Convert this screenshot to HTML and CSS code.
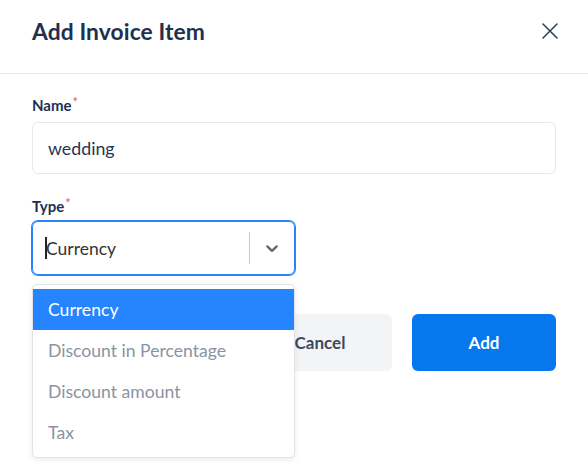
FILE: index.html
```html
<!DOCTYPE html>
<html>
<head>
<meta charset="utf-8">
<link rel="stylesheet" href="styles.css">
</head>
<body>
<div class="modal">
  <div class="header">
    <h1 class="title">Add Invoice Item</h1>
    <svg class="close" width="16" height="16" viewBox="0 0 16 16"><path d="M1 1 L15 15 M15 1 L1 15" stroke="#2c3e55" stroke-width="1.5" stroke-linecap="round"/></svg>
  </div>
  <div class="body">
    <div class="field">
      <div class="label">Name<span class="req">*</span></div>
      <div class="input">wedding</div>
    </div>
    <div class="field field-type">
      <div class="label">Type<span class="req">*</span></div>
      <div class="select-wrap">
        <div class="select">
          <div class="value"><span class="caret"></span>Currency</div>
          <div class="sep"></div>
          <div class="indicator">
            <svg width="20" height="20" viewBox="0 0 20 20"><path fill="#666" d="M4.516 7.548c0.436-0.446 1.043-0.481 1.576 0l3.908 3.747 3.908-3.747c0.533-0.481 1.141-0.446 1.574 0 0.436 0.445 0.408 1.197 0 1.615-0.406 0.418-4.695 4.502-4.695 4.502-0.217 0.223-0.502 0.335-0.787 0.335s-0.57-0.112-0.789-0.335c0 0-4.287-4.084-4.695-4.502s-0.436-1.170 0-1.615z"/></svg>
          </div>
        </div>
        <div class="menu">
          <div class="option active">Currency</div>
          <div class="option">Discount in Percentage</div>
          <div class="option">Discount amount</div>
          <div class="option">Tax</div>
        </div>
      </div>
    </div>
    <div class="actions">
      <button class="btn btn-cancel">Cancel</button>
      <button class="btn btn-add">Add</button>
    </div>
  </div>
</div>
</body>
</html>
```

FILE: styles.css
```css
* { box-sizing: border-box; }
html, body { margin: 0; padding: 0; background: #fff; }
body { font-family: "Lato", "Noto Sans", sans-serif; color: #1e3050; min-height: 471px; }
.modal { width: 588px; min-height: 471px; }
.header {
  height: 74px;
  padding: 0 30px 12px 32px;
  display: flex;
  align-items: center;
  justify-content: space-between;
  border-bottom: 1px solid #e8e9ec;
}
.title { margin: 0; font-size: 22.8px; font-weight: 700; color: #1e3050; letter-spacing: 0.1px; }
.close { display: block; margin-top: 0; }
.body { padding: 21px 32px 0; }
.label { font-size: 15px; font-weight: 700; line-height: 20px; color: #1e3050; }
.req { color: #e8557a; font-size: 13px; font-weight: 400; vertical-align: top; position: relative; top: -3px; margin-left: 1px; }
.input {
  margin-top: 7px;
  height: 52px;
  border: 1px solid #e5e7eb;
  border-radius: 6px;
  padding: 0 15px;
  display: flex;
  align-items: center;
  font-size: 17.8px;
  color: #1f3556;
}
.field-type { margin-top: 22px; }
.select-wrap { position: relative; width: 263px; margin-top: 5px; }
.select {
  height: 54px;
  border: 1px solid #2684ff;
  box-shadow: 0 0 0 1px #2684ff;
  border-radius: 6px;
  display: flex;
  align-items: center;
}
.value { flex: 1; padding-left: 12px; font-size: 17.5px; color: #333; display: flex; align-items: center; }
.caret { display: inline-block; width: 1.5px; height: 22px; background: #222; margin-right: -0.5px; }
.sep { width: 1px; height: 32px; background: #cccccc; }
.indicator { width: 44px; display: flex; align-items: center; justify-content: center; }
.indicator svg { display: block; }
.menu {
  position: absolute;
  left: 0; right: 0;
  top: 63px;
  background: #fff;
  border-radius: 5px;
  border: 1px solid #e2e3e6;
  box-shadow: 0 2px 6px rgba(0,0,0,0.08);
  padding: 4px 0;
  z-index: 2;
}
.option { height: 41px; padding: 0 15px; display: flex; align-items: center; font-size: 17.6px; color: #8a93a3; }
.option.active { background: #2684ff; color: #fff; }
.actions { display: flex; justify-content: flex-end; gap: 20px; margin-top: 39px; }
.btn {
  width: 144px; height: 57px; border: none; border-radius: 6px;
  font-family: inherit; font-size: 17px; font-weight: 700;
}
.btn-cancel { background: #f3f4f6; color: #3b4a60; }
.btn-add { background: #0777ee; color: #fff; }
```
